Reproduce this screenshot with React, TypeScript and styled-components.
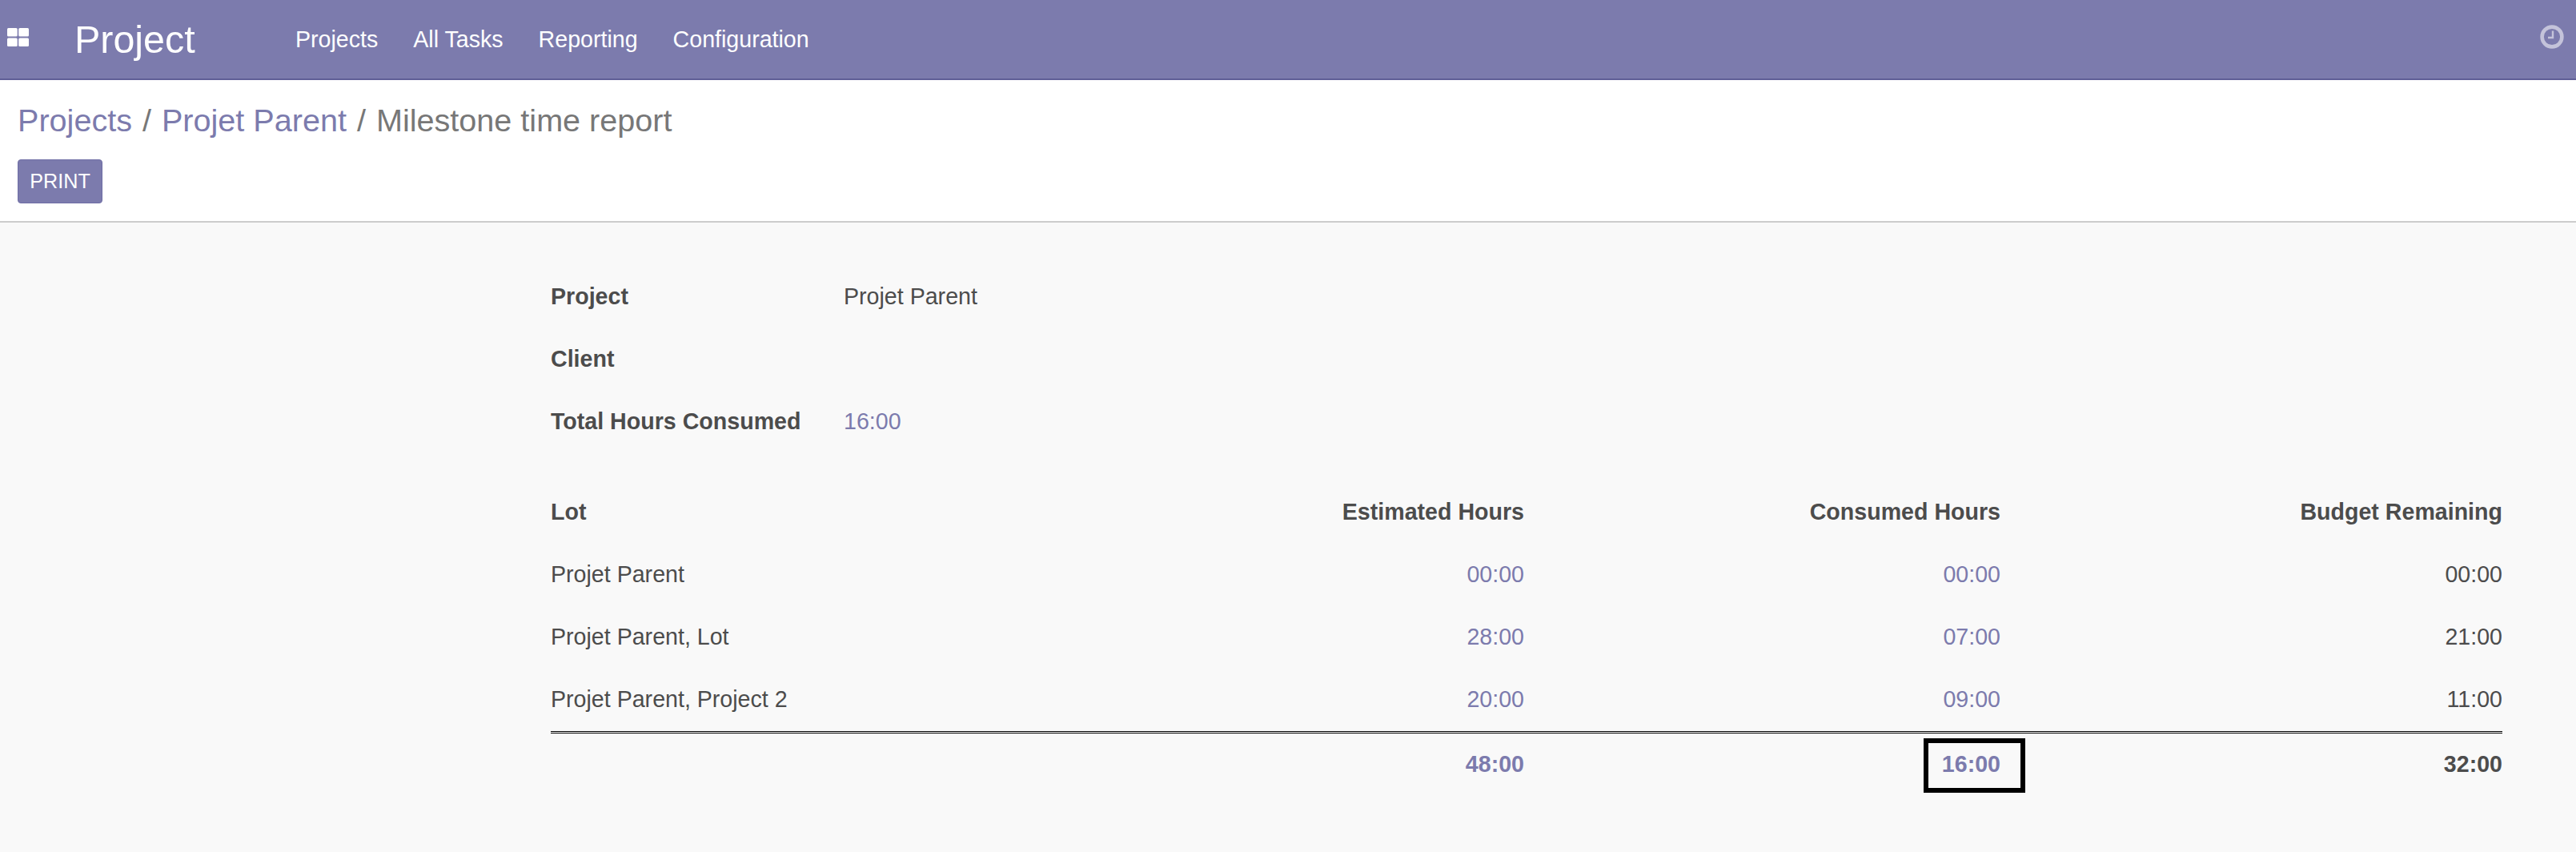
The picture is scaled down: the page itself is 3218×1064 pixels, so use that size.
import styled, { createGlobalStyle } from "styled-components";

const GlobalStyle = createGlobalStyle`
    html, body {
        margin: 0;
        padding: 0;
        background: #f9f9f9;
    }
    body {
        font-family: "Liberation Sans", Arial, sans-serif;
        font-size: 28.6px;
        color: #4c4c4c;
    }
`;

const lots = [
    { name: "Projet Parent", estimated: "00:00", consumed: "00:00", remaining: "00:00" },
    { name: "Projet Parent, Lot", estimated: "28:00", consumed: "07:00", remaining: "21:00" },
    { name: "Projet Parent, Project 2", estimated: "20:00", consumed: "09:00", remaining: "11:00" },
];

function AppsIcon() {
    return (
        <svg width="27" height="23" viewBox="0 0 27 23" fill="#fff">
            <rect x="0" y="0" width="12.7" height="10.5" rx="1.5" />
            <rect x="14.3" y="0" width="12.7" height="10.5" rx="1.5" />
            <rect x="0" y="12.5" width="12.7" height="10.5" rx="1.5" />
            <rect x="14.3" y="12.5" width="12.7" height="10.5" rx="1.5" />
        </svg>
    );
}

function ClockIcon() {
    return (
        <svg width="30" height="30" viewBox="0 0 30 30" fill="none" stroke="#fff" opacity="0.55">
            <circle cx="15" cy="15" r="12.4" strokeWidth="4.6" />
            <path d="M16 7.5V16H10" strokeWidth="2.4" />
        </svg>
    );
}

export default function App() {
    return (
        <Page>
            <GlobalStyle />
            <NavBar>
                <AppsToggle>
                    <AppsIcon />
                </AppsToggle>
                <Brand>Project</Brand>
                <Menu>
                    <MenuItem>Projects</MenuItem>
                    <MenuItem>All Tasks</MenuItem>
                    <MenuItem>Reporting</MenuItem>
                    <MenuItem>Configuration</MenuItem>
                </Menu>
                <Systray>
                    <ClockIcon />
                </Systray>
            </NavBar>
            <ControlPanel>
                <Breadcrumb>
                    <Crumb>Projects</Crumb>
                    <Separator>/</Separator>
                    <Crumb>Projet Parent</Crumb>
                    <Separator>/</Separator>
                    <CurrentCrumb>Milestone time report</CurrentCrumb>
                </Breadcrumb>
                <PrintButton>PRINT</PrintButton>
            </ControlPanel>
            <Report>
                <InfoList>
                    <InfoRow>
                        <InfoLabel>Project</InfoLabel>
                        <span>Projet Parent</span>
                    </InfoRow>
                    <InfoRow>
                        <InfoLabel>Client</InfoLabel>
                    </InfoRow>
                    <InfoRow>
                        <InfoLabel>Total Hours Consumed</InfoLabel>
                        <LinkValue>16:00</LinkValue>
                    </InfoRow>
                </InfoList>
                <Table>
                    <thead>
                        <tr>
                            <HeadCell>Lot</HeadCell>
                            <HeadCell $right>Estimated Hours</HeadCell>
                            <HeadCell $right>Consumed Hours</HeadCell>
                            <HeadCell $right>Budget Remaining</HeadCell>
                        </tr>
                    </thead>
                    <tbody>
                        {lots.map((lot) => (
                            <tr key={lot.name}>
                                <Cell>{lot.name}</Cell>
                                <Cell $right $link>{lot.estimated}</Cell>
                                <Cell $right $link>{lot.consumed}</Cell>
                                <Cell $right>{lot.remaining}</Cell>
                            </tr>
                        ))}
                    </tbody>
                    <tfoot>
                        <tr>
                            <TotalCell />
                            <TotalCell $right $link>48:00</TotalCell>
                            <TotalCell $right $link>
                                16:00
                                <Highlight />
                            </TotalCell>
                            <TotalCell $right>32:00</TotalCell>
                        </tr>
                    </tfoot>
                </Table>
            </Report>
        </Page>
    );
}

const Page = styled.div`
    min-height: 1064px;
    background: #f9f9f9;
`;

const NavBar = styled.header`
    display: flex;
    align-items: center;
    box-sizing: border-box;
    height: 100px;
    background: #7c7bad;
    border-bottom: 2px solid #5f5e97;
    color: #fff;
`;

const AppsToggle = styled.div`
    display: flex;
    width: 36px;
    padding-left: 9px;
    margin-top: -5px;
    box-sizing: border-box;
`;

const Brand = styled.div`
    margin-left: 57px;
    width: 254px;
    font-size: 48.4px;
    line-height: 56px;
`;

const Menu = styled.nav`
    display: flex;
`;

const MenuItem = styled.div`
    padding: 0 22px;
    font-size: 28.6px;
`;

const Systray = styled.div`
    display: flex;
    margin-left: auto;
    margin-right: 15px;
    margin-top: -7px;
`;

const ControlPanel = styled.div`
    box-sizing: border-box;
    height: 178px;
    padding: 26px 22px 0;
    background: #fff;
    border-bottom: 2px solid #ccc;
`;

const Breadcrumb = styled.div`
    display: flex;
    gap: 13px;
    height: 73px;
    font-size: 39.6px;
    line-height: 48px;
`;

const Crumb = styled.span`
    color: #7c7bad;
`;

const Separator = styled.span`
    color: #777;
`;

const CurrentCrumb = styled.span`
    color: #777;
`;

const PrintButton = styled.button`
    display: block;
    width: 106px;
    height: 55px;
    padding: 0;
    background: #7c7bad;
    border: 1px solid #6f6ea5;
    border-radius: 4px;
    color: #fff;
    font-family: inherit;
    font-size: 25.2px;
`;

const Report = styled.main`
    padding: 54px 92px 0 688px;
`;

const InfoList = styled.div`
    display: flex;
    flex-direction: column;
`;

const InfoRow = styled.div`
    display: flex;
    align-items: center;
    box-sizing: border-box;
    height: 78px;
    padding-bottom: 2px;
`;

const InfoLabel = styled.span`
    width: 366px;
    font-weight: 700;
`;

const LinkValue = styled.span`
    color: #7c7bad;
`;

const Table = styled.table`
    width: 100%;
    margin-top: 35px;
    border-collapse: separate;
    border-spacing: 0;
    table-layout: fixed;

    th:nth-child(1) {
        width: 600px;
    }
    th:nth-child(2) {
        width: 616px;
    }
    th:nth-child(3) {
        width: 595px;
    }
`;

const HeadCell = styled.th<{ $right?: boolean }>`
    box-sizing: border-box;
    height: 78px;
    padding: 0 0 2px;
    font-weight: 700;
    text-align: ${(p) => (p.$right ? "right" : "left")};
`;

const Cell = styled.td<{ $right?: boolean; $link?: boolean }>`
    box-sizing: border-box;
    height: 78px;
    padding: 0 0 2px;
    text-align: ${(p) => (p.$right ? "right" : "left")};
    color: ${(p) => (p.$link ? "#7c7bad" : "#4c4c4c")};
`;

const TotalCell = styled(Cell)`
    position: relative;
    height: 81px;
    border-top: 3px double #000;
    font-weight: 700;
`;

const Highlight = styled.span`
    position: absolute;
    top: 6px;
    right: -31px;
    box-sizing: border-box;
    width: 127px;
    height: 68px;
    border: 6px solid #000;
`;
